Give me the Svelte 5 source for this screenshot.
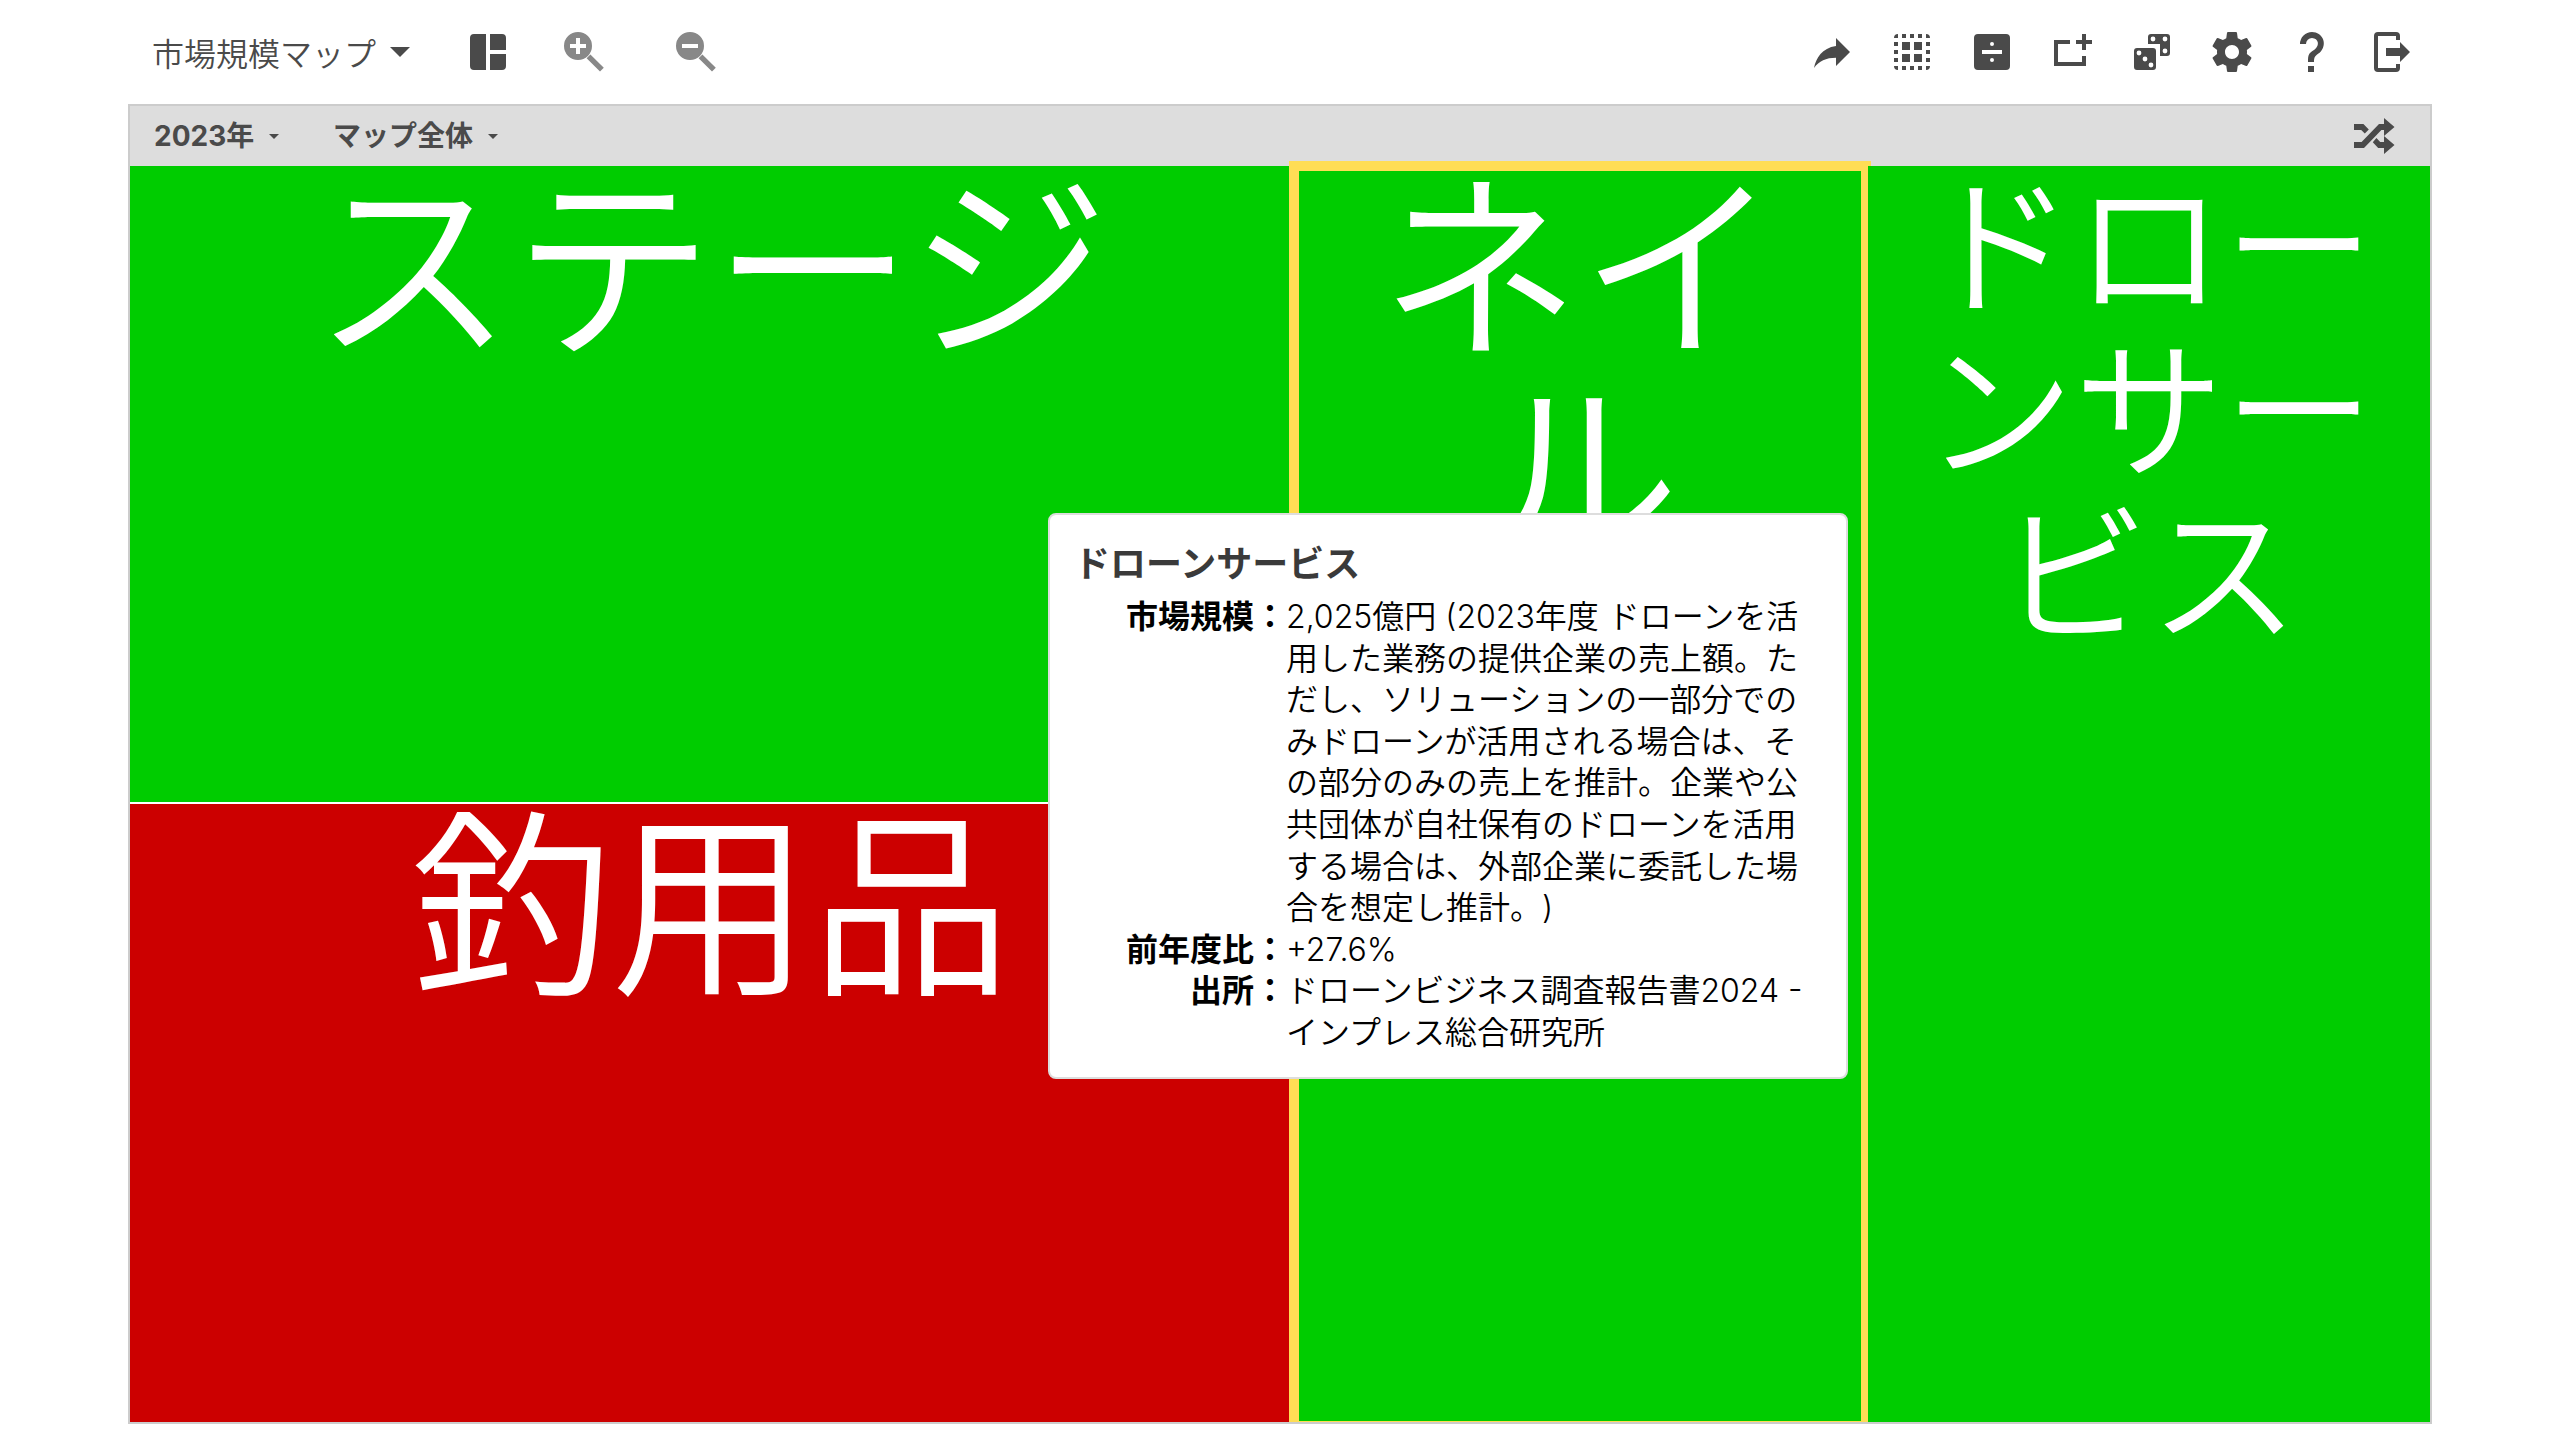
<script>
	const cells = [
		{ name: 'ステージ', area: 'stage', trend: 'up' },
		{ name: '釣用品', area: 'fishing', trend: 'down' },
		{ name: 'ネイル', area: 'nail', trend: 'up', selected: true },
		{ name: 'ドローンサービス', area: 'drone', trend: 'up', small: true }
	];

	const details = [
		{
			label: '市場規模',
			value:
				'2,025億円 (2023年度 ドローンを活用した業務の提供企業の売上額。ただし、ソリューションの一部分でのみドローンが活用される場合は、その部分のみの売上を推計。企業や公共団体が自社保有のドローンを活用する場合は、外部企業に委託した場合を想定し推計。)'
		},
		{ label: '前年度比', value: '+27.6%' },
		{ label: '出所', value: 'ドローンビジネス調査報告書2024 - インプレス総合研究所' }
	];

	// 24x24 icon paths
	const actions = [
		{
			label: '共有',
			path: 'M21 12l-7-7v4C7 10 4 15 3 20c2.5-3.5 6-5.1 11-5.1V19l7-7z'
		},
		{
			label: '選択',
			path: 'M5 3v2H3a2 2 0 0 1 2-2zM7 3h2v2H7zM11 3h2v2h-2zM15 3h2v2h-2zM19 3a2 2 0 0 1 2 2h-2zM3 7h2v2H3zM3 11h2v2H3zM3 15h2v2H3zM19 7h2v2h-2zM19 11h2v2h-2zM19 15h2v2h-2zM3 19h2v2a2 2 0 0 1-2-2zM7 19h2v2H7zM11 19h2v2h-2zM15 19h2v2h-2zM19 19h2a2 2 0 0 1-2 2zM7 7h4v4H7zM13 7h4v4h-4zM7 13h4v4H7zM13 13h4v4h-4z'
		},
		{
			label: '割り算',
			path: 'M5 3h14a2 2 0 0 1 2 2v14a2 2 0 0 1-2 2H5a2 2 0 0 1-2-2V5a2 2 0 0 1 2-2zM7 11v2h10v-2zM12 7a1 1 0 1 0 0 2a1 1 0 1 0 0-2zM12 15a1 1 0 1 0 0 2a1 1 0 1 0 0-2z'
		},
		{
			label: '追加',
			path: 'M3 6h8v2H5v9h12v-3h2v5H3zM17 3h2v3h3v2h-3v3h-2V8h-3V6h3z'
		},
		{
			label: 'ランダム',
			path: 'M4.500 10h8A1.500 1.500 0 0 1 14 11.500v8a1.500 1.500 0 0 1-1.500 1.500h-8A1.500 1.500 0 0 1 3 19.500v-8A1.500 1.500 0 0 1 4.500 10zM5.500 11.300a1.200 1.200 0 1 0 0 2.400a1.200 1.200 0 1 0 0-2.400zM8.500 14.300a1.200 1.200 0 1 0 0 2.400a1.200 1.200 0 1 0 0-2.400zM11.500 17.300a1.200 1.200 0 1 0 0 2.400a1.200 1.200 0 1 0 0-2.400zM11.500 3h8A1.500 1.500 0 0 1 21 4.500v8a1.500 1.500 0 0 1-1.500 1.500H16V8h-6V4.500A1.500 1.500 0 0 1 11.500 3zM12.500 4.300a1.200 1.200 0 1 0 0 2.400a1.200 1.200 0 1 0 0-2.400zM18.500 4.300a1.200 1.200 0 1 0 0 2.400a1.200 1.200 0 1 0 0-2.400zM18.500 10.300a1.200 1.200 0 1 0 0 2.400a1.200 1.200 0 1 0 0-2.400z'
		},
		{
			label: '設定',
			path: 'M19.43 12.98c.04-.32.07-.64.07-.98s-.03-.66-.07-.98l2.11-1.65c.19-.15.24-.42.12-.64l-2-3.46c-.12-.22-.39-.3-.61-.22l-2.49 1c-.52-.4-1.08-.73-1.69-.98l-.38-2.65C14.46 2.18 14.25 2 14 2h-4c-.25 0-.46.18-.49.42l-.38 2.65c-.61.25-1.17.59-1.69.98l-2.49-1c-.23-.09-.49 0-.61.22l-2 3.46c-.13.22-.07.49.12.64l2.11 1.65c-.04.32-.07.65-.07.98s.03.66.07.98l-2.11 1.65c-.19.15-.24.42-.12.64l2 3.46c.12.22.39.3.61.22l2.49-1c.52.4 1.08.73 1.69.98l.38 2.65c.03.24.24.42.49.42h4c.25 0 .46-.18.49-.42l.38-2.65c.61-.25 1.17-.59 1.69-.98l2.49 1c.23.09.49 0 .61-.22l2-3.46c.12-.22.07-.49-.12-.64l-2.11-1.65zM12 15.5c-1.93 0-3.5-1.57-3.5-3.5s1.57-3.5 3.5-3.5 3.5 1.57 3.5 3.5-1.57 3.5-3.5 3.5z'
		},
		{
			label: 'ヘルプ',
			path: 'M10 19h3v3h-3zM12 2C17.35 2.22 19.68 7.62 16.5 11.67C15.67 12.67 14.33 13.33 13.67 14.17C13 15 13 16 13 17H10C10 15.33 10 13.92 10.67 12.92C11.33 11.92 12.67 11.33 13.5 10.67C15.92 8.43 15.32 5.26 12 5A3 3 0 0 0 9 8H6A6 6 0 0 1 12 2Z'
		},
		{
			label: 'ログアウト',
			path: 'M5 2h9a2 2 0 0 1 2 2v2h-2V4H5v16h9v-2h2v2a2 2 0 0 1-2 2H5a2 2 0 0 1-2-2V4a2 2 0 0 1 2-2zM16 7l5 5-5 5v-3H9v-4h7z'
		}
	];
</script>

<div class="page">
	<header class="toolbar">
		<button class="title">
			市場規模マップ
			<svg class="caret" viewBox="0 0 20 10"><path d="M0 0h20L10 10z" /></svg>
		</button>
		<button class="icon" aria-label="レイアウト">
			<svg viewBox="0 0 24 24">
				<path d="M5 3h6v18H5a2 2 0 0 1-2-2V5a2 2 0 0 1 2-2zM13 3h6a2 2 0 0 1 2 2v6h-8zM13 13h8v6a2 2 0 0 1-2 2h-6z" />
			</svg>
		</button>
		<div class="zoom">
			<button class="icon" aria-label="拡大">
				<svg viewBox="0 0 24 24">
					<path fill-rule="evenodd" d="M9 2a7 7 0 1 0 0 14a7 7 0 1 0 0-14zM8 5h2v3h3v2h-3v3H8v-3H5V8h3zM15.200 13.200l6.700 6.700-1.900 1.900-6.700-6.700z" />
				</svg>
			</button>
			<button class="icon" aria-label="縮小">
				<svg viewBox="0 0 24 24">
					<path fill-rule="evenodd" d="M9 2a7 7 0 1 0 0 14a7 7 0 1 0 0-14zM5 8h8v2H5zM15.200 13.200l6.700 6.700-1.900 1.900-6.700-6.700z" />
				</svg>
			</button>
		</div>

		<nav class="actions">
			{#each actions as action}
				<button class="icon" aria-label={action.label}>
					<svg viewBox="0 0 24 24"><path fill-rule="evenodd" d={action.path} /></svg>
				</button>
			{/each}
		</nav>
	</header>

	<main class="map">
		<div class="filters">
			<label>
				<select aria-label="年">
					<option>2023年</option>
				</select>
				<svg class="caret" viewBox="0 0 20 10"><path d="M0 0h20L10 10z" /></svg>
			</label>
			<label>
				<select aria-label="範囲">
					<option>マップ全体</option>
				</select>
				<svg class="caret" viewBox="0 0 20 10"><path d="M0 0h20L10 10z" /></svg>
			</label>
			<button class="icon shuffle" aria-label="シャッフル">
				<svg viewBox="0 0 24 24">
					<path d="M17 3l5.250 4.500L17 12V9h-1.300L7 18H2v-3h3.800L14.500 6H17zM2 6h4.700l2.700 2.800-2 2L5.600 9H2zM13.200 13l1.900 2H17v-3l5.250 4.500L17 21v-3h-2.900l-2.700-2.900z" />
				</svg>
			</button>
		</div>

		<div class="treemap">
			{#each cells as cell}
				<div
					class="cell {cell.area} {cell.trend}"
					class:selected={cell.selected}
					class:small={cell.small}
				>
					{cell.name}
				</div>
			{/each}
		</div>

		<!-- Details of the hovered market -->
		<div class="tooltip" role="tooltip">
			<h2>ドローンサービス</h2>
			<dl>
				{#each details as item}
					<dt>{item.label}：</dt>
					<dd>{item.value}</dd>
				{/each}
			</dl>
		</div>
	</main>
</div>

<style>
	:global(body) {
		margin: 0;
		background: #fff;
	}

	.page {
		display: flex;
		flex-direction: column;
		box-sizing: border-box;
		width: 90%;
		min-height: 100vh;
		margin: 0 auto;
		padding-bottom: 16px;
		color: #4a4a4a;
		font-family: Inter, 'Noto Sans CJK JP', sans-serif;
		text-spacing-trim: space-all;
	}

	button,
	select {
		margin: 0;
		padding: 0;
		border: none;
		background: none;
		color: inherit;
		font: inherit;
		cursor: pointer;
	}

	svg {
		display: block;
		fill: currentColor;
	}

	.toolbar {
		display: flex;
		align-items: center;
		height: 104px;
		padding: 0 16px 0 24px;
	}

	.title {
		display: flex;
		align-items: center;
		gap: 14px;
		margin-right: 54px;
		font-size: 32px;
		font-weight: 350;
	}

	.title .caret {
		width: 20px;
		height: 10px;
	}

	.icon svg {
		width: 48px;
		height: 48px;
	}

	.zoom {
		display: flex;
		gap: 64px;
		margin-left: 48px;
		color: #888;
	}

	.actions {
		display: flex;
		gap: 32px;
		margin-left: auto;
	}

	.map {
		position: relative;
		display: flex;
		flex: 1;
		flex-direction: column;
		border: 2px solid #ccc;
	}

	.filters {
		display: flex;
		align-items: center;
		gap: 54px;
		height: 60px;
		padding: 0 32px 0 24px;
		background: #ddd;
		font-size: 28px;
		font-weight: 700;
	}

	.filters label {
		display: flex;
		align-items: center;
		gap: 14px;
	}

	.filters select {
		appearance: none;
	}

	.filters .caret {
		width: 10px;
		height: 5px;
	}

	.shuffle {
		margin-left: auto;
	}

	.treemap {
		display: grid;
		flex: 1;
		grid-template-areas:
			'stage nail drone'
			'fishing nail drone';
		grid-template-columns: 1162fr 572fr 562fr;
		grid-template-rows: 636fr 618fr;
		gap: 2px;
	}

	.cell {
		position: relative;
		min-width: 0;
		color: #fff;
		font-size: 200px;
		font-weight: 350;
		line-height: 206px;
		text-align: center;
	}

	.cell.small {
		font-size: 150px;
		line-height: 164px;
	}

	.up {
		background: #00cc00;
	}

	.down {
		background: #cc0000;
	}

	.stage {
		grid-area: stage;
	}

	.fishing {
		grid-area: fishing;
	}

	.nail {
		grid-area: nail;
	}

	.drone {
		grid-area: drone;
	}

	.selected::after {
		content: '';
		position: absolute;
		inset: -5px -5px 0;
		border: 10px solid #ffdd55;
		border-bottom-width: 1px;
	}

	.tooltip {
		position: absolute;
		top: 407px;
		left: 918px;
		box-sizing: border-box;
		width: 800px;
		padding: 25px 24px 23px;
		border: 2px solid #ddd;
		border-radius: 8px;
		background: #fff;
		color: #000;
	}

	.tooltip h2 {
		margin: 0 0 8px;
		color: #3a3a3a;
		font-size: 36px;
		font-weight: 700;
		line-height: 48px;
	}

	.tooltip dl {
		display: grid;
		grid-template-columns: 212px 1fr;
		margin: 0;
		padding-right: 12px;
		font-size: 32px;
		font-weight: 350;
		line-height: 1.3;
	}

	.tooltip dt {
		font-weight: 700;
		text-align: right;
	}

	.tooltip dd {
		margin: 0;
	}
</style>
